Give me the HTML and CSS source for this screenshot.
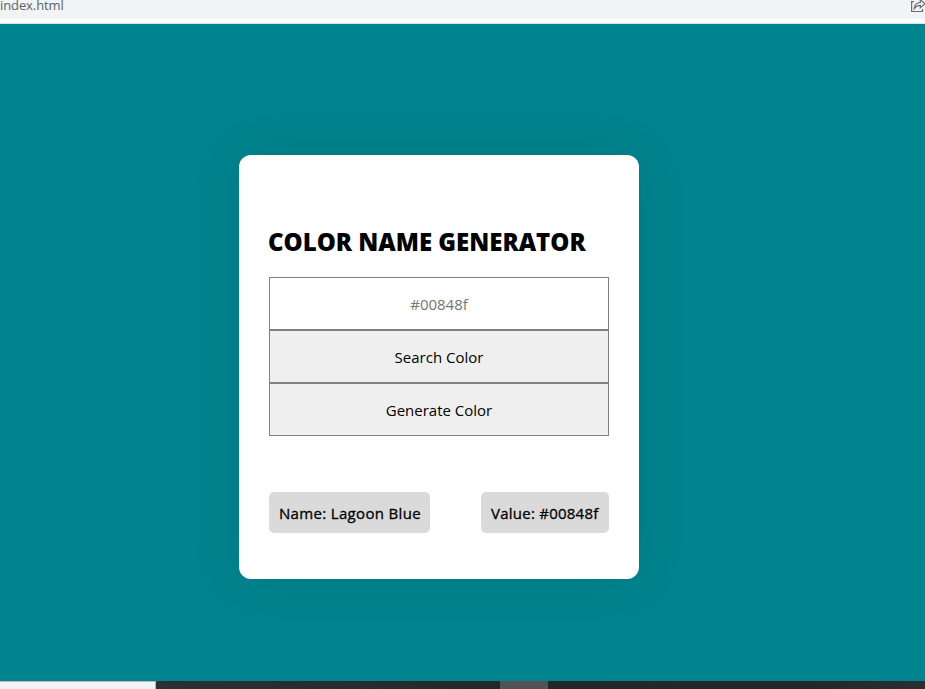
FILE: index.html
```html
<!DOCTYPE html>
<html lang="en">
<head>
<meta charset="utf-8">
<title>Color Name Generator</title>
<link rel="stylesheet" href="styles.css">
</head>
<body>
<header class="toolbar">
  <span class="url">index.html</span>
  <svg class="share" width="14" height="14" viewBox="0 0 14 14" fill="none" stroke="#6b6f73" stroke-width="1.2"><path d="M3 1.600H.6V11.500H11.500V9"/><path d="M3.300 8.600C3.500 4.800 5.500 2.700 9.300 2.500V-.4L14 3.700 9.300 7.600V5.300C6.500 5.300 4.700 6.400 3.300 8.600Z"/></svg>
</header>
<main class="page">
  <section class="card">
    <h1 class="title">COLOR NAME GENERATOR</h1>
    <input class="control field" type="text" placeholder="#00848f">
    <button class="control search">Search Color</button>
    <button class="control generate">Generate Color</button>
    <div class="results">
      <span class="tag name">Name: Lagoon Blue</span>
      <span class="tag value">Value: #00848f</span>
    </div>
  </section>
</main>
<footer class="taskbar">
  <div class="task-search"></div>
  <div class="task-active"></div>
</footer>
</body>
</html>
```

FILE: styles.css
```css
* { box-sizing: border-box; }
body {
  margin: 0;
  height: 689px;
  display: flex;
  flex-direction: column;
  overflow: hidden;
  font-family: "Open Sans", "Noto Sans", sans-serif;
}
.toolbar {
  height: 24px;
  flex: none;
  display: flex;
  justify-content: space-between;
  align-items: flex-start;
  background: linear-gradient(#f1f3f4 19px, #fff 19px, #fff 23px, #d9e3e5 23px);
}
.url {
  height: 14px;
  font-size: 13px;
  line-height: 10px;
  letter-spacing: -0.1px;
  color: #5f6368;
}
.share { display: block; }
.page {
  flex: 1;
  background: #00848f;
  padding: 131px 0 0 239px;
}
.card {
  width: 400px;
  height: 424px;
  padding: 70px 30px 0;
  background: #fff;
  border-radius: 12px;
  box-shadow: 0 0 50px rgba(0, 0, 0, 0.1);
}
.title {
  margin: 0 0 18px -1px;
  height: 34px;
  font-size: 24px;
  line-height: 34px;
  font-weight: 800;
  white-space: nowrap;
}
.control {
  display: block;
  width: 340px;
  height: 53px;
  padding: 1px 0 0;
  border: 1px solid #808080;
  border-radius: 0;
  background: #efefef;
  color: #000;
  font-family: inherit;
  font-size: 15px;
  text-align: center;
}
.field { background: #fff; }
.field::placeholder { color: #757575; opacity: 1; }
.results {
  display: flex;
  justify-content: space-between;
  margin-top: 56px;
}
.tag {
  height: 41px;
  padding: 0 0 0 10px;
  border-radius: 5px;
  background: #dadada;
  font-size: 15px;
  line-height: 43px;
  -webkit-text-stroke: 0.3px #000;
  white-space: nowrap;
}
.name {
  width: 161px;
  letter-spacing: 0.33px;
}
.value {
  width: 128px;
  letter-spacing: 0.24px;
}
.taskbar {
  height: 8px;
  flex: none;
  display: flex;
  background: linear-gradient(90deg, #2c2f36 156px, #25282a 500px, #252628 800px, #2b2e33);
}
.task-search {
  width: 156px;
  height: 8px;
  background: #f2f2f2;
  border: solid #b9b9b9;
  border-width: 1px 1px 0 0;
}
.task-active {
  width: 48px;
  height: 8px;
  margin-left: 344px;
  background: #535353;
}
```
